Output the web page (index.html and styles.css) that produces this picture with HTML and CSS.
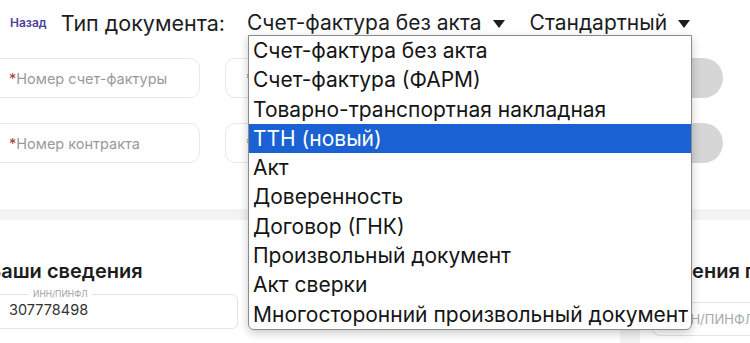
FILE: index.html
```html
<!DOCTYPE html>
<html lang="ru">
<head>
    <meta charset="UTF-8">
    <meta name="viewport" content="width=device-width, initial-scale=1.0">
    <title>Документ</title>
    <link rel="stylesheet" href="styles.css">
</head>
<body>
    <div class="top-card">
        <div class="topbar">
            <a class="back" href="#">Назад</a>
            <span class="doc-title">Тип документа:</span>
            <div class="select-wrap">
                <span class="select">Счет-фактура без акта
                    <svg class="caret" width="14" height="10" viewBox="0 0 14 10"><path d="M1 1h12L7 9z" fill="#1d1d1f"/></svg>
                </span>
                <div class="dropdown">
                    <div class="option">Счет-фактура без акта</div>
                    <div class="option">Счет-фактура (ФАРМ)</div>
                    <div class="option">Товарно-транспортная накладная</div>
                    <div class="option selected">ТТН (новый)</div>
                    <div class="option">Акт</div>
                    <div class="option">Доверенность</div>
                    <div class="option">Договор (ГНК)</div>
                    <div class="option">Произвольный документ</div>
                    <div class="option">Акт сверки</div>
                    <div class="option">Многосторонний произвольный документ</div>
                </div>
            </div>
            <span class="select">Стандартный
                <svg class="caret" width="14" height="10" viewBox="0 0 14 10"><path d="M1 1h12L7 9z" fill="#1d1d1f"/></svg>
            </span>
        </div>

        <div class="form-row">
            <div class="field"><span class="req">*</span>Номер счет-фактуры</div>
            <div class="field"><span class="req gray">*</span></div>
            <div class="pill"></div>
        </div>
        <div class="form-row">
            <div class="field"><span class="req">*</span>Номер контракта</div>
            <div class="field"><span class="req gray">*</span></div>
            <div class="pill"></div>
        </div>
    </div>

    <div class="bottom">
        <div class="col left">
            <h2>Ваши сведения</h2>
            <fieldset class="box">
                <legend>ИНН/ПИНФЛ</legend>
                <span class="value">307778498</span>
            </fieldset>
        </div>
        <div class="col right">
            <h2>Сведения покупателя</h2>
            <div class="input">ИНН/ПИНФЛ</div>
        </div>
    </div>
</body>
</html>
```

FILE: styles.css
```css
body {
    margin: 0;
    font-family: Inter, "Noto Sans", sans-serif;
    color: #1d1d1f;
    background-color: #f3f3f3;
    width: 750px;
    height: 343px;
    overflow: hidden;
}
.top-card {
    background-color: #fff;
    height: 209px;
    box-sizing: border-box;
    padding-top: 10px;
}
.topbar {
    display: flex;
    align-items: center;
    padding-left: 10px;
    height: 25px;
}
.back {
    color: #4b3f9e;
    font-size: 12px;
    font-weight: 600;
    text-decoration: none;
    margin-right: 14px;
}
.doc-title {
    font-size: 21.5px;
    margin-right: 22px;
    white-space: nowrap;
}
.select-wrap {
    position: relative;
    margin-right: 24px;
}
.select {
    font-size: 21px;
    display: flex;
    align-items: center;
    gap: 10px;
    white-space: nowrap;
}
.caret {
    margin-top: 2px;
}
.dropdown {
    position: absolute;
    top: 25px;
    left: 1px;
    width: 444px;
    background-color: #fff;
    border: 1px solid #8c8c8c;
    border-radius: 0 0 6px 6px;
    box-shadow: 0 3px 10px rgba(0, 0, 0, 0.22);
    box-sizing: border-box;
    z-index: 5;
}
.option {
    height: 29.3px;
    line-height: 29.3px;
    padding-left: 4px;
    font-size: 21px;
    color: #151515;
    white-space: nowrap;
}
.option.selected {
    background-color: #1a62d4;
    color: #fff;
}
.form-row {
    display: flex;
    gap: 25px;
    margin-left: -12px;
    margin-top: 23px;
}
.form-row + .form-row {
    margin-top: 25px;
}
.field {
    width: 212px;
    height: 40px;
    box-sizing: border-box;
    border: 1px solid #e8e8e8;
    border-radius: 10px;
    padding-left: 20px;
    display: flex;
    align-items: center;
    font-size: 14.5px;
    color: #9a9a9a;
    white-space: nowrap;
}
.req {
    color: #b03a3a;
}
.req.gray {
    color: #777;
}
.pill {
    margin-left: auto;
    margin-right: 27px;
    width: 80px;
    height: 40px;
    border-radius: 0 20px 20px 0;
    background-color: #d6d6d6;
}
.bottom {
    display: flex;
    margin-top: 11px;
    gap: 20px;
}
.col {
    background-color: #fff;
    height: 130px;
    box-sizing: border-box;
    padding-top: 39px;
}
.col.left {
    margin-left: -12px;
    width: 632px;
    flex-shrink: 0;
}
.col.right {
    flex: 1;
    min-width: 0;
    overflow: hidden;
    padding-left: 1px;
}
h2 {
    font-size: 20px;
    font-weight: 600;
    margin: 0;
    height: 24px;
    line-height: 24px;
    white-space: nowrap;
}
.box {
    margin: 6px 0 0 0;
    border: 1px solid #e4e4e4;
    border-radius: 6px;
    padding: 0 0 0 20px;
    height: 40px;
    box-sizing: border-box;
    width: 250px;
}
.box legend {
    font-size: 8.5px;
    color: #a0a0a0;
    margin-left: 20px;
    padding: 0 4px;
}
.value {
    font-size: 14.5px;
    color: #333;
    line-height: 22px;
}
.input {
    margin: 19px 0 0 11px;
    border: 1px solid #e4e4e4;
    border-right: none;
    border-radius: 8px 0 0 8px;
    height: 34px;
    box-sizing: border-box;
    padding-left: 18px;
    display: flex;
    align-items: center;
    font-size: 13px;
    color: #a8a8a8;
    white-space: nowrap;
}
```
